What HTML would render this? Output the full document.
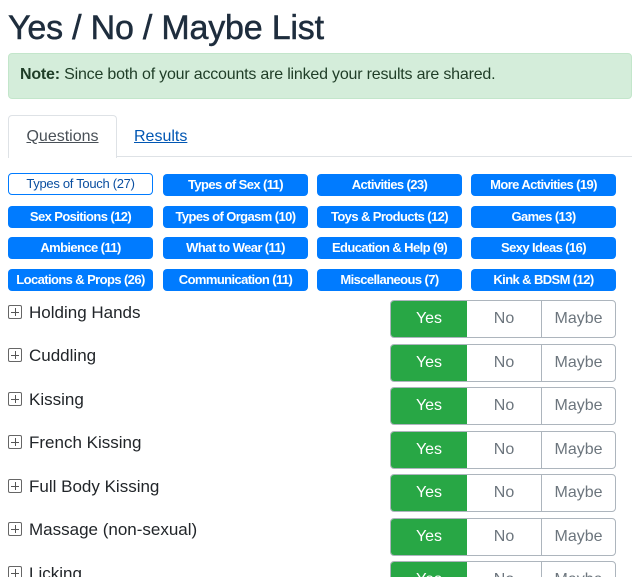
<!DOCTYPE html>
<html><head><meta charset="utf-8"><style>
*{box-sizing:border-box;margin:0;padding:0}
html,body{width:640px;height:577px;overflow:hidden}
body{background:#fff;font-family:"Liberation Sans",sans-serif;color:#212529;position:relative}
h1{position:absolute;left:8px;top:9px;font-size:34px;font-weight:normal;color:#1e2d3d;letter-spacing:-0.2px;-webkit-text-stroke:0.5px #1e2d3d}
.alert{position:absolute;left:8px;top:53px;width:624px;height:46px;background:#d4edda;border:1px solid #c3e6cb;border-radius:4px;font-size:16px;color:#1f3d27;padding:12px 11px;letter-spacing:-0.2px}
.tabline{position:absolute;left:117px;top:156px;width:515px;border-top:1px solid #dee2e6}
.tab{position:absolute;left:8px;top:115px;width:109px;height:43px;border:1px solid #dee2e6;border-bottom:none;border-radius:4px 4px 0 0;background:#fff;font-size:16px;text-align:center;padding-top:12px;color:#495057;text-decoration:underline}
.res{position:absolute;left:134px;top:128px;font-size:16px;color:#0056b3;text-decoration:underline}
.cat{position:absolute;height:22px;width:145px;background:#007bff;color:#fff;border-radius:4px;font-size:13px;font-weight:bold;text-align:center;line-height:22px;letter-spacing:-0.6px;white-space:nowrap}
.cat.o{background:#fff;color:#0b4fa0;border:1px solid #007bff;line-height:20px;font-weight:normal;letter-spacing:-0.3px}
.q{position:absolute;left:8px;font-size:17px;color:#212529}
.q i{display:inline-block;width:14px;height:14px;border:1px solid #666;border-radius:2px;position:relative;vertical-align:-1px;margin-right:7px}
.q i:before{content:"";position:absolute;left:2px;top:5.5px;width:8px;height:1px;background:#555}
.q i:after{content:"";position:absolute;top:2px;left:5.5px;height:8px;width:1px;background:#555}
.g{position:absolute;left:390px;width:226px;height:38px;border:1px solid #adb5bd;border-radius:4px;display:flex;overflow:hidden;font-size:16px}
.g div{line-height:36px;text-align:center;color:#6c757d}
.g .y{width:76px;background:#28a745;color:#fff}
.g .n{width:75px;border-right:1px solid #adb5bd}
.g .m{flex:1}
</style></head><body>
<h1>Yes / No / Maybe List</h1>
<div class="alert"><b>Note:</b> Since both of your accounts are linked your results are shared.</div>
<div class="tabline"></div>
<div class="tab">Questions</div>
<div class="res">Results</div>

<div class="cat o" style="left:8px;top:173px">Types of Touch (27)</div>
<div class="cat" style="left:163px;top:174px">Types of Sex (11)</div>
<div class="cat" style="left:317px;top:174px">Activities (23)</div>
<div class="cat" style="left:471px;top:174px">More Activities (19)</div>
<div class="cat" style="left:8px;top:206px">Sex Positions (12)</div>
<div class="cat" style="left:163px;top:206px">Types of Orgasm (10)</div>
<div class="cat" style="left:317px;top:206px">Toys &amp; Products (12)</div>
<div class="cat" style="left:471px;top:206px">Games (13)</div>
<div class="cat" style="left:8px;top:237px">Ambience (11)</div>
<div class="cat" style="left:163px;top:237px">What to Wear (11)</div>
<div class="cat" style="left:317px;top:237px">Education &amp; Help (9)</div>
<div class="cat" style="left:471px;top:237px">Sexy Ideas (16)</div>
<div class="cat" style="left:8px;top:269px">Locations &amp; Props (26)</div>
<div class="cat" style="left:163px;top:269px">Communication (11)</div>
<div class="cat" style="left:317px;top:269px">Miscellaneous (7)</div>
<div class="cat" style="left:471px;top:269px">Kink &amp; BDSM (12)</div>

<div class="q" style="top:303px"><i></i>Holding Hands</div>
<div class="g" style="top:300px"><div class="y">Yes</div><div class="n">No</div><div class="m">Maybe</div></div>
<div class="q" style="top:346px"><i></i>Cuddling</div>
<div class="g" style="top:344px"><div class="y">Yes</div><div class="n">No</div><div class="m">Maybe</div></div>
<div class="q" style="top:390px"><i></i>Kissing</div>
<div class="g" style="top:387px"><div class="y">Yes</div><div class="n">No</div><div class="m">Maybe</div></div>
<div class="q" style="top:433px"><i></i>French Kissing</div>
<div class="g" style="top:431px"><div class="y">Yes</div><div class="n">No</div><div class="m">Maybe</div></div>
<div class="q" style="top:477px"><i></i>Full Body Kissing</div>
<div class="g" style="top:474px"><div class="y">Yes</div><div class="n">No</div><div class="m">Maybe</div></div>
<div class="q" style="top:520px"><i></i>Massage (non-sexual)</div>
<div class="g" style="top:518px"><div class="y">Yes</div><div class="n">No</div><div class="m">Maybe</div></div>
<div class="q" style="top:564px"><i></i>Licking</div>
<div class="g" style="top:561px"><div class="y">Yes</div><div class="n">No</div><div class="m">Maybe</div></div>
</body></html>
